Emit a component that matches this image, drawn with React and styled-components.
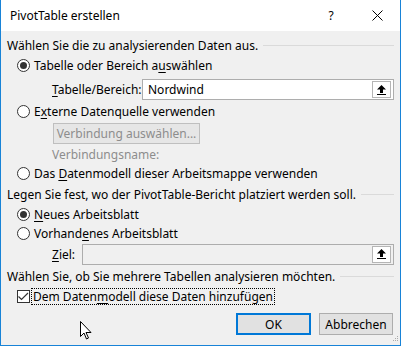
import React from 'react';
import styled, { createGlobalStyle } from 'styled-components';

const Global = createGlobalStyle`
  html, body { margin: 0; padding: 0; background: #fff; }
  body { font-family: "Noto Sans", "Open Sans", sans-serif; font-size: 12px; color: #000; }
  * { box-sizing: border-box; }
`;

const Window = styled.div`
  width: 401px;
  height: 346px;
  border: 1px solid #1883d7;
  border-top: none;
  background: #f0f0f0;
  display: flex;
  flex-direction: column;
  position: relative;
  overflow: hidden;
`;

const TitleBar = styled.div`
  height: 31px;
  background: #fff;
  display: flex;
  align-items: center;
  padding-left: 9px;
  font-size: 12px;
`;

const Title = styled.div`
  flex: 1;
`;

const TitleButton = styled.div`
  width: 46px;
  height: 31px;
  display: flex;
  align-items: center;
  justify-content: center;
`;

const Body = styled.div`
  flex: 1;
  padding: 6px 6px 0 6px;
  display: flex;
  flex-direction: column;
`;

const Heading = styled.div`
  display: flex;
  align-items: center;
  height: 16px;
  margin-top: ${p => p.$top || 0}px;
  white-space: nowrap;
  &::after {
    content: '';
    flex: 1;
    height: 1px;
    background: #dadada;
    margin-left: 5px;
  }
`;

const Row = styled.div`
  display: flex;
  align-items: center;
  height: ${p => p.$h || 19}px;
  padding-left: ${p => p.$indent || 10}px;
  margin-top: ${p => p.$top || 0}px;
  color: ${p => (p.$muted ? '#8d8d8d' : '#000')};
  white-space: nowrap;
`;

const Radio = styled.span`
  width: 13px;
  height: 13px;
  border-radius: 50%;
  border: 1px solid #333;
  background: #fff;
  margin-right: 4px;
  display: flex;
  align-items: center;
  justify-content: center;
  flex-shrink: 0;
  &::after {
    content: '';
    width: 7px;
    height: 7px;
    border-radius: 50%;
    background: ${p => (p.$checked ? '#333' : 'transparent')};
  }
`;

const U = styled.span`
  text-decoration: underline;
  text-underline-offset: 2px;
`;

const FieldLabel = styled.span`
  width: ${p => p.$w}px;
  flex-shrink: 0;
`;

const Field = styled.div`
  flex: 1;
  height: 21px;
  border: 1px solid #adadad;
  background: ${p => (p.$disabled ? '#f0f0f0' : '#fff')};
  display: flex;
  align-items: center;
  padding: 2px;
`;

const FieldText = styled.div`
  flex: 1;
  height: 100%;
  display: flex;
  align-items: center;
  padding-left: 3px;
  background: ${p => (p.$disabled ? '#f0f0f0' : '#fff')};
`;

const PickButton = styled.div`
  width: 19px;
  height: 17px;
  background: #fff;
  border: 1px solid #b5b5b5;
  display: flex;
  align-items: center;
  justify-content: center;
`;

const DisabledButton = styled.div`
  margin-left: 46px;
  margin-top: 2px;
  width: 147px;
  height: 21px;
  border: 1px solid #bfbfbf;
  background: #e6e6e6;
  color: #8d8d8d;
  display: flex;
  align-items: center;
  justify-content: center;
`;

const Check = styled.span`
  width: 13px;
  height: 13px;
  border: 1px solid #333;
  background: #fff;
  margin-right: 2px;
  display: flex;
  align-items: center;
  justify-content: center;
  flex-shrink: 0;
`;

const Focus = styled.span`
  outline: 1px dotted #000;
  padding: 0 1px;
  line-height: 15px;
`;

const Footer = styled.div`
  display: flex;
  justify-content: flex-end;
  gap: 8px;
  margin-top: 7px;
  padding-right: 1px;
`;

const Button = styled.div`
  width: ${p => (p.$primary ? 75 : 74)}px;
  height: 22px;
  border: ${p => (p.$primary ? '2px solid #0078d7' : '1px solid #adadad')};
  background: #e1e1e1;
  display: flex;
  align-items: center;
  justify-content: center;
`;

const Cursor = styled.svg`
  position: absolute;
  left: 79px;
  top: 321px;
`;

const Grip = styled.svg`
  position: absolute;
  right: 1px;
  bottom: 1px;
`;

const UpArrow = () => (
  <svg width="9" height="10" viewBox="0 0 9 10">
    <path d="M4.5 0 L9 4.5 L6 4.5 L6 8 L3 8 L3 4.5 L0 4.5 Z" fill="#000" />
    <rect x="0" y="9" width="9" height="1" fill="#000" />
  </svg>
);

const App = () => (
  <>
    <Global />
    <Window>
      <TitleBar>
        <Title>PivotTable erstellen</Title>
        <TitleButton>?</TitleButton>
        <TitleButton>
          <svg width="11" height="11" viewBox="0 0 11 11">
            <path d="M0.5 0.5 L10.5 10.5 M10.5 0.5 L0.5 10.5" stroke="#000" strokeWidth="1" />
          </svg>
        </TitleButton>
      </TitleBar>
      <Body>
        <Heading>Wählen Sie die zu analysierenden Daten aus.</Heading>
        <Row $top={3}>
          <Radio $checked />
          <span>Tabelle oder Bereich a<U>u</U>swählen</span>
        </Row>
        <Row $indent={45} $h={25} $top={2}>
          <FieldLabel $w={90}><U>T</U>abelle/Bereich:</FieldLabel>
          <Field>
            <FieldText>Nordwind</FieldText>
            <PickButton><UpArrow /></PickButton>
          </Field>
        </Row>
        <Row>
          <Radio />
          <span>E<U>x</U>terne Datenquelle verwenden</span>
        </Row>
        <DisabledButton>Verbindung auswählen...</DisabledButton>
        <Row $indent={45} $top={1} $muted>Verbindungsname:</Row>
        <Row>
          <Radio />
          <span>Das <U>D</U>atenmodell dieser Arbeitsmappe verwenden</span>
        </Row>
        <Heading $top={3}>Legen Sie fest, wo der PivotTable-Bericht platziert werden soll.</Heading>
        <Row $top={3}>
          <Radio $checked />
          <span><U>N</U>eues Arbeitsblatt</span>
        </Row>
        <Row>
          <Radio />
          <span>Vorhand<U>e</U>nes Arbeitsblatt</span>
        </Row>
        <Row $indent={45} $h={22}>
          <FieldLabel $w={30}><U>Z</U>iel:</FieldLabel>
          <Field $disabled>
            <FieldText $disabled />
            <PickButton><UpArrow /></PickButton>
          </Field>
        </Row>
        <Heading $top={3}>Wählen Sie, ob Sie mehrere Tabellen analysieren möchten.</Heading>
        <Row $top={3}>
          <Check>
            <svg width="11" height="9" viewBox="0 0 11 9">
              <path d="M0.5 4.5 L3.5 7.5 L10 1" stroke="#333" strokeWidth="1.2" fill="none" />
            </svg>
          </Check>
          <Focus>Dem Daten<U>m</U>odell diese Daten hinzufügen</Focus>
        </Row>
        <Footer>
          <Button $primary>OK</Button>
          <Button>Abbrechen</Button>
        </Footer>
      </Body>
      <Cursor width="13" height="20" viewBox="0 0 13 20">
        <path d="M0.5 0.5 L0.5 15.5 L4 12 L6.5 18 L8.5 17 L6 11.5 L11 11.5 Z" fill="#fff" stroke="#000" strokeWidth="1" />
      </Cursor>
      <Grip width="10" height="10" viewBox="0 0 10 10">
        <rect x="8" y="2" width="1" height="1" fill="#aaa" />
        <rect x="6" y="4" width="1" height="1" fill="#aaa" />
        <rect x="8" y="4" width="1" height="1" fill="#aaa" />
        <rect x="4" y="6" width="1" height="1" fill="#aaa" />
        <rect x="6" y="6" width="1" height="1" fill="#aaa" />
        <rect x="8" y="6" width="1" height="1" fill="#aaa" />
      </Grip>
    </Window>
  </>
);

export default App;
